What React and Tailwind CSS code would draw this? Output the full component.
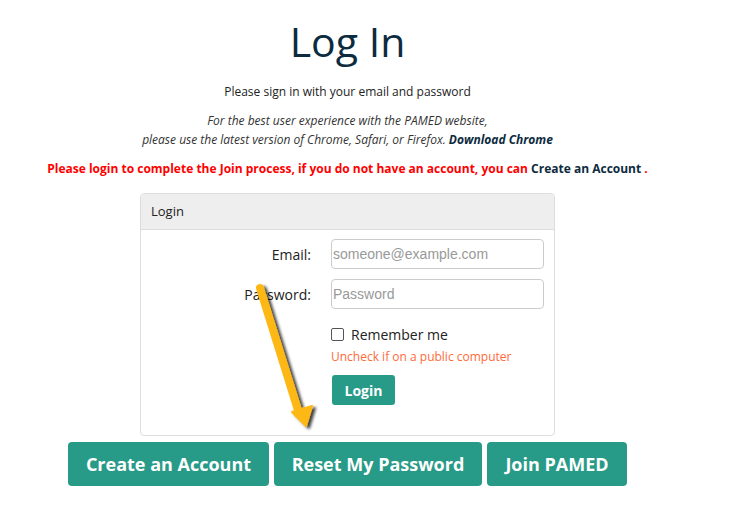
import React from 'react';

const teal = 'bg-[#279a88]';

function Arrow() {
  return (
    <svg
      className="absolute left-[248px] top-[278px] pointer-events-none"
      width="80"
      height="160"
      viewBox="0 0 80 160"
    >
      <defs>
        <filter id="sh" x="-50%" y="-20%" width="200%" height="140%">
          <feGaussianBlur in="SourceAlpha" stdDeviation="1.6" />
          <feOffset dx="2.5" dy="1.5" />
          <feComponentTransfer>
            <feFuncA type="linear" slope="0.75" />
          </feComponentTransfer>
          <feMerge>
            <feMergeNode />
            <feMergeNode in="SourceGraphic" />
          </feMerge>
        </filter>
      </defs>
      <g filter="url(#sh)">
        <line x1="12" y1="10" x2="50" y2="132" stroke="#fdb813" strokeWidth="8" strokeLinecap="round" />
        <path d="M44 134 L64 128 L58 148 Z" fill="#fdb813" stroke="#fdb813" strokeWidth="2" strokeLinejoin="round" />
      </g>
    </svg>
  );
}

export default function App() {
  return (
    <div className="relative w-[751px] h-[510px] bg-white overflow-hidden font-['Open_Sans',sans-serif]">
      <div className="w-[695px] flex flex-col items-center text-center">
        <h1 className="mt-[13px] text-[41px] leading-[56px] text-[#0d2b3e]">Log In</h1>
        <p className="mt-[14px] text-[12px] leading-[18px] text-[#222]">Please sign in with your email and password</p>
        <p className="mt-[10px] text-[12px] leading-[19px] italic text-[#333]">
          For the best user experience with the PAMED website,
          <br />
          please use the latest version of Chrome, Safari, or Firefox.{' '}
          <span className="font-bold text-[#0d2b3e]">Download Chrome</span>
        </p>
        <p className="mt-[11px] text-[12px] leading-[18px] font-bold text-[#ff0000]">
          Please login to complete the Join process, if you do not have an account, you can{' '}
          <span className="text-[#0d2b3e]">Create an Account</span> .
        </p>

        <div className="mt-[15px] w-[415px] h-[243px] border border-[#ddd] rounded-[4px] text-left">
          <div className="h-[36px] bg-[#eeeeee] border-b border-[#ddd] rounded-t-[4px] px-[10px] flex items-center text-[13px] text-[#222]">
            Login
          </div>
          <div className="pt-[9px]">
            <div className="flex items-center h-[30px]">
              <label className="w-[170px] text-right text-[14px] text-[#222]">Email:</label>
              <input
                placeholder="someone@example.com"
                className="ml-[20px] w-[213px] h-[30px] px-[1px] border border-[#ccc] rounded-[4px] text-[14px] font-['Liberation_Sans',sans-serif] placeholder:text-[#999] outline-none"
              />
            </div>
            <div className="flex items-center h-[30px] mt-[10px]">
              <label className="w-[170px] text-right text-[14px] text-[#222]">Password:</label>
              <input
                placeholder="Password"
                type="password"
                className="ml-[20px] w-[213px] h-[30px] px-[1px] border border-[#ccc] rounded-[4px] text-[14px] font-['Liberation_Sans',sans-serif] placeholder:text-[#999] outline-none"
              />
            </div>
            <div className="ml-[190px] mt-[15px] flex items-center gap-[7px]">
              <span className="w-[13px] h-[13px] border border-[#555] rounded-[2px] bg-white" />
              <span className="text-[14px] text-[#222]">Remember me</span>
            </div>
            <div className="ml-[190px] mt-[3px] text-[12px] text-[#ff6a3a]">Uncheck if on a public computer</div>
            <button className={`ml-[191px] mt-[9px] w-[63px] h-[30px] ${teal} rounded-[3px] text-white text-[14px] font-bold`}>
              Login
            </button>
          </div>
        </div>

        <div className="mt-[6px] flex gap-[5px]">
          <button className={`w-[201px] h-[44px] ${teal} rounded-[4px] text-white text-[18px] font-bold`}>Create an Account</button>
          <button className={`w-[208px] h-[44px] ${teal} rounded-[4px] text-white text-[18px] font-bold`}>Reset My Password</button>
          <button className={`w-[140px] h-[44px] ${teal} rounded-[4px] text-white text-[18px] font-bold`}>Join PAMED</button>
        </div>
      </div>
      <Arrow />
    </div>
  );
}
